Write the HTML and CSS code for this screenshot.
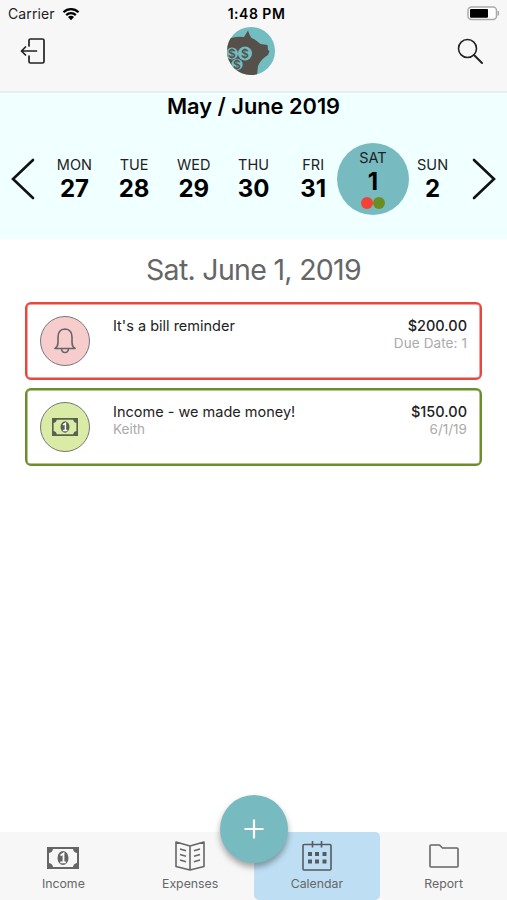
FILE: index.html
```html
<!DOCTYPE html>
<html lang="en">
<head>
    <meta charset="UTF-8">
    <meta name="viewport" content="width=device-width, initial-scale=1.0">
    <title>Calendar</title>
    <link rel="stylesheet" href="styles.css">
</head>
<body>
    <svg class="defs" width="0" height="0" aria-hidden="true">
        <symbol id="bill" viewBox="0 0 32 22">
            <path fill="currentColor" fill-rule="evenodd" d="M0 0h32v22H0zM6 2Q5.500 5.500 2 6v10Q5.500 16.500 6 20h20q.5-3.500 4-4V6Q26.500 5.500 26 2z"/>
            <ellipse cx="16" cy="11" rx="5.500" ry="7" fill="currentColor"/>
            <path class="bill-mark" d="M13.500 8.500l3-2v8.500M13.300 15.300h5.600"/>
        </symbol>
    </svg>

    <header class="header">
        <div class="status">
            <div class="carrier">
                <span>Carrier</span>
                <svg width="18" height="14" viewBox="0 0 18 14">
                    <path d="M1.500 5.200a10.600 10.600 0 0 1 15 0M4.200 8.100a6.800 6.800 0 0 1 9.600 0" fill="none" stroke="#000" stroke-width="2.200"/>
                    <path d="M6 10.100a4.200 4.200 0 0 1 6 0L9 13.200z"/>
                </svg>
            </div>
            <span class="time">1:48 PM</span>
            <svg class="battery" width="33" height="15" viewBox="0 0 33 15">
                <rect x="1" y="1" width="28.500" height="12.600" rx="3.500" fill="#fff" stroke="#aaa" stroke-width="1.500"/>
                <rect x="3" y="3" width="18" height="8.800" rx="1"/>
                <path d="M31 5q1.800 2.300 0 4.600z" fill="#999" stroke="#999" stroke-width=".6"/>
            </svg>
        </div>
        <div class="toolbar">
            <svg class="logout" width="26" height="26" viewBox="0 0 26 26" fill="none" stroke="#222" stroke-width="1.700" stroke-linecap="round" stroke-linejoin="round">
                <path d="M9 8V2.500Q9 1 10.500 1h12Q24 1 24 2.500v21q0 1.500-1.500 1.500h-12Q9 25 9 23.500V18M16.500 13H1.500M5.500 9l-4 4 4 4"/>
            </svg>
            <svg class="logo" width="48" height="48" viewBox="0 0 48 48">
                <clipPath id="round"><circle cx="24" cy="24" r="24"/></clipPath>
                <g clip-path="url(#round)">
                    <path fill="#73bcc0" d="M0 0h48v48H0z"/>
                    <path fill="#56504a" d="M0 13Q7 9 17 10l4-6.500q1.500 5 3.500 7.500 5 2 9 6l7 1 .5 5 1.500 1-1.500 4Q34 32 31 39l-1 9H0z"/>
                    <g fill="#73bcc0">
                        <circle cx="5" cy="26.500" r="6"/>
                        <circle cx="18" cy="26.500" r="7"/>
                        <circle cx="10" cy="37.500" r="5.700"/>
                    </g>
                    <g class="coins" text-anchor="middle">
                        <text x="5" y="30.500">$</text>
                        <text x="18" y="30.500">$</text>
                        <text x="10" y="41.500">$</text>
                    </g>
                </g>
            </svg>
            <svg class="search" width="27" height="27" viewBox="0 0 27 27" fill="none" stroke="#222" stroke-width="1.600" stroke-linecap="round">
                <circle cx="10.500" cy="10.500" r="9"/>
                <path d="M17 17l8 8" stroke-width="2"/>
            </svg>
        </div>
    </header>

    <section class="week">
        <h1>May / June 2019</h1>
        <div class="days">
            <svg class="arrow" width="24" height="42" viewBox="0 0 24 42"><path d="M22 2L2 21l20 19"/></svg>
            <div class="day"><span>MON</span><b>27</b></div>
            <div class="day"><span>TUE</span><b>28</b></div>
            <div class="day"><span>WED</span><b>29</b></div>
            <div class="day"><span>THU</span><b>30</b></div>
            <div class="day"><span>FRI</span><b>31</b></div>
            <div class="day selected">
                <span>SAT</span><b>1</b>
                <div class="dots"><i class="dot red"></i><i class="dot green"></i></div>
            </div>
            <div class="day"><span>SUN</span><b>2</b></div>
            <svg class="arrow" width="24" height="42" viewBox="0 0 24 42"><path d="M2 2l20 19L2 40"/></svg>
        </div>
    </section>

    <main class="list">
        <h2>Sat. June 1, 2019</h2>
        <article class="card expense">
            <div class="badge">
                <svg width="22" height="26" viewBox="0 0 22 26" fill="none" stroke="#666" stroke-width="1.600" stroke-linejoin="round">
                    <path d="M1 20.500q3-2 3-6V9q0-7.500 7-8 7 .5 7 8v5.500q0 4 3 6zM7.500 21q.5 3.500 3.500 3.500t3.500-3.500"/>
                </svg>
            </div>
            <div class="info"><p>It's a bill reminder</p></div>
            <div class="amount"><p>$200.00</p><small class="due">Due Date: 1</small></div>
        </article>
        <article class="card income">
            <div class="badge"><svg width="26" height="18"><use href="#bill"/></svg></div>
            <div class="info"><p>Income - we made money!</p><small>Keith</small></div>
            <div class="amount"><p>$150.00</p><small>6/1/19</small></div>
        </article>
    </main>

    <nav class="tabs">
        <a class="tab"><svg width="32" height="22"><use href="#bill"/></svg><span>Income</span></a>
        <a class="tab">
            <svg width="30" height="30" viewBox="0 0 30 30" fill="none" stroke="#666" stroke-width="1.600" stroke-linejoin="round">
                <path d="M15 5L1 1v24.500L15 29l14-3.500V1zM15 5v24M5 8l6 1.700M5 13.500l6 1.700M5 19l6 1.700M25 8l-6 1.700M25 13.500l-6 1.700M25 19l-6 1.700"/>
            </svg>
            <span>Expenses</span>
        </a>
        <a class="tab active">
            <svg width="30" height="30" viewBox="0 0 30 30" fill="none" stroke="#555b60" stroke-width="1.600">
                <rect x="1" y="3.500" width="28" height="25.500" rx="1"/>
                <path d="M10.500 0v6.500M19.500 0v6.500"/>
                <path d="M6 13h4M13 13h4M20.500 13h4M6 20.500h4M13 20.500h4M20.500 20.500h4" stroke-width="4"/>
            </svg>
            <span>Calendar</span>
        </a>
        <a class="tab">
            <svg width="30" height="24" viewBox="0 0 30 24" fill="none" stroke="#666" stroke-width="1.600" stroke-linejoin="round">
                <path d="M2 1h8.500l3 3H28q1 0 1 1v17q0 1-1 1H2q-1 0-1-1V2q0-1 1-1z"/>
            </svg>
            <span>Report</span>
        </a>
        <button class="add" aria-label="Add">
            <svg width="20" height="20" viewBox="0 0 20 20" stroke="#fff" stroke-width="2.200"><path d="M10 .5v19M.5 10h19"/></svg>
        </button>
    </nav>
</body>
</html>
```

FILE: styles.css
```css
* {
    box-sizing: border-box;
}
body {
    font-family: Inter, "Liberation Sans", sans-serif;
    background-color: #fff;
    color: #000;
    margin: 0;
    height: 900px;
    display: flex;
    flex-direction: column;
    overflow: hidden;
}
h1, h2, p {
    margin: 0;
}
svg {
    display: block;
    flex-shrink: 0;
}
.defs {
    position: absolute;
}
.bill-mark {
    fill: none;
    stroke: #fff;
    stroke-width: 1.8;
}
.header {
    height: 93px;
    background-color: #f7f7f7;
    border-bottom: 2px solid #e6eeee;
}
.status {
    display: grid;
    grid-template-columns: 1fr auto 1fr;
    align-items: center;
    height: 27px;
    padding: 0 7px 0 8px;
    font-size: 14px;
}
.carrier {
    display: flex;
    align-items: center;
    gap: 7px;
    color: #222;
}
.carrier span {
    letter-spacing: 0.1px;
}
.time {
    font-weight: 600;
    letter-spacing: 0.5px;
    padding-left: 5px;
}
.battery {
    justify-self: end;
}
.toolbar {
    display: grid;
    grid-template-columns: 1fr 48px 1fr;
    align-items: center;
    height: 48px;
    padding: 0 23px 0 20px;
}
.logo {
    margin-left: -1px;
}
.search {
    justify-self: end;
}
.coins {
    font-size: 12px;
    font-weight: 600;
    fill: #56504a;
}
.week {
    height: 146px;
    background-color: #f0ffff;
}
h1 {
    font-size: 21.8px;
    font-weight: 600;
    line-height: 26px;
    text-align: center;
}
.days {
    display: flex;
    align-items: center;
    justify-content: center;
    height: 120px;
}
.arrow {
    width: 24px;
    margin: 0 9.5px;
    fill: none;
    stroke: #111;
    stroke-width: 2.6;
    stroke-linecap: round;
}
.day {
    flex: none;
    width: 59.7px;
    height: 72px;
    padding-top: 13px;
    display: flex;
    flex-direction: column;
    align-items: center;
}
.day span {
    font-size: 14.5px;
    line-height: 18px;
    color: #222;
}
.day b {
    font-size: 24px;
    line-height: 30px;
    font-weight: 700;
}
.selected {
    width: 72px;
    margin: 0 -6.15px;
    padding-top: 6px;
    border-radius: 50%;
    background-color: #77bac0;
}
.dots {
    display: flex;
}
.dot {
    width: 12px;
    height: 12px;
    border-radius: 50%;
}
.red {
    background-color: #f44336;
}
.green {
    background-color: #6b8e23;
}
.list {
    flex: 1;
    padding: 0 25px;
}
h2 {
    font-size: 28.5px;
    font-weight: 400;
    letter-spacing: -0.7px;
    line-height: 36px;
    color: #666;
    text-align: center;
    margin: 13px 0 14px;
}
.card {
    display: flex;
    height: 78px;
    margin-bottom: 8px;
    padding: 12px 13px;
    border: 2px solid #e8473f;
    border-radius: 6px;
    box-shadow: inset 0 0 0 0.5px #e8473f;
}
.income {
    border-color: #6b8e2b;
    box-shadow: inset 0 0 0 0.5px #6b8e2b;
}
.badge {
    width: 50px;
    height: 50px;
    border: 1.5px solid #777;
    border-radius: 50%;
    background-color: #f6cccc;
    color: #5b6150;
    display: flex;
    align-items: center;
    justify-content: center;
}
.income .badge {
    background-color: #d9eba4;
}
.income .bill-mark {
    stroke: #d9eba4;
}
.info {
    flex: 1;
    padding: 1px 0 0 23px;
}
.amount {
    padding-top: 1px;
    text-align: right;
}
.card p {
    font-size: 14.5px;
    line-height: 18px;
    color: #222;
}
.card small {
    display: block;
    font-size: 13.5px;
    line-height: 16px;
    color: #aaa;
}
.card .due {
    letter-spacing: 0.1px;
}
.amount p {
    font-weight: 500;
}
.tabs {
    position: relative;
    display: grid;
    grid-template-columns: repeat(4, 1fr);
    height: 68px;
    background-color: #f7f7f7;
}
.tab {
    display: flex;
    flex-direction: column;
    align-items: center;
    justify-content: flex-end;
    gap: 4px;
    padding-bottom: 8px;
    font-size: 12.3px;
    line-height: 17px;
    color: #666;
}
.tab:first-child {
    gap: 6px;
}
.tab:last-of-type {
    gap: 7px;
}
.active {
    background-color: #bedff3;
    border-radius: 5px;
}
.add {
    position: absolute;
    left: 220px;
    top: -37px;
    width: 68px;
    height: 68px;
    padding: 0;
    border: none;
    border-radius: 50%;
    background-color: #77bac0;
    box-shadow: 0 4px 6px rgba(0, 0, 0, 0.35);
    display: flex;
    align-items: center;
    justify-content: center;
}
```
